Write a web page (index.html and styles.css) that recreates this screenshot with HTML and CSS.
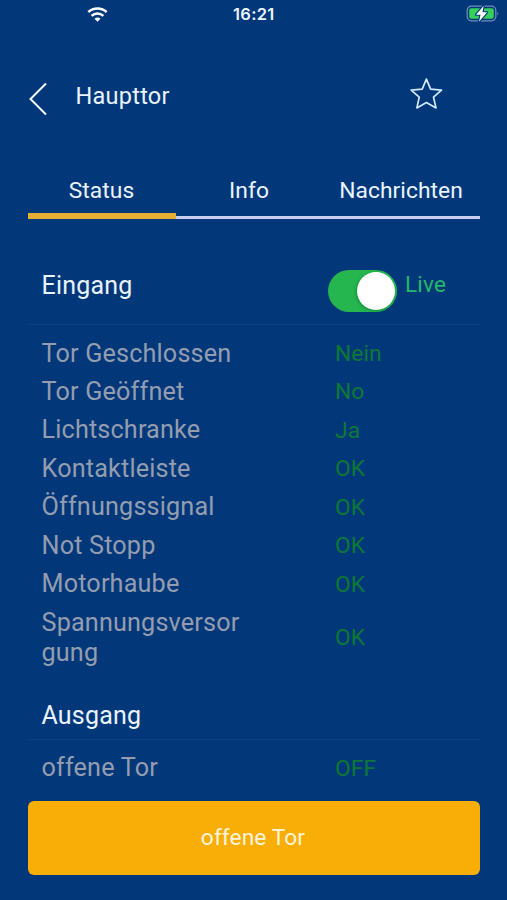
FILE: index.html
```html
<!DOCTYPE html>
<html lang="de">
<head>
<meta charset="utf-8">
<title>Haupttor</title>
<link rel="stylesheet" href="styles.css">
</head>
<body>
<div class="statusbar">
  <svg class="wifi" width="21" height="15" viewBox="0 0 21 15" fill="none" stroke="#fff" stroke-width="2.5">
    <path d="M1.300 5C6.500.3 14.500.3 19.700 5"/><path d="M4.600 8.900C8 5.800 13 5.800 16.400 8.900"/>
    <path d="M10.500 14.800 7.500 11.700Q10.500 9.300 13.500 11.700Z" fill="#fff" stroke="none"/>
  </svg>
  <span class="time">16:21</span>
  <svg class="battery" width="34" height="18" viewBox="0 0 34 18">
    <rect x="1.200" y="1.200" width="28.600" height="14.600" rx="4.200" fill="none" stroke="#6f91b8" stroke-width="1.200"/>
    <path d="M31.300 6.500Q33 8.500 31.300 10.500Z" fill="#6f91b8"/>
    <rect x="3.200" y="3.200" width="24.600" height="10.600" rx="2" fill="#35cf5b"/>
    <path d="M17.700.8 10 9.700H14.500L13 16.700 21.100 7.300H16.500Z" fill="#fff" stroke="#02387a" stroke-width="2.200" paint-order="stroke" stroke-linejoin="round"/>
  </svg>
</div>
<header class="header">
  <svg class="back" width="20" height="34" viewBox="0 0 20 34" fill="none" stroke="#f4f9ff" stroke-width="2"><path d="M17 1.500 1.500 17 17 32.500"/></svg>
  <h1 class="title">Haupttor</h1>
  <svg class="star" width="34" height="32" viewBox="0 0 34 32" fill="none" stroke="#d3e9ff" stroke-width="1.700" stroke-linejoin="round"><path d="M17.400 2.100 21.600 12.200 32.500 13.100 24.500 20.200 27 30.900 17.400 25.500 7.900 30.900 10.200 20.200 2.200 13.100 13.200 12.200Z"/></svg>
</header>
<nav class="tabs">
  <span class="tab active">Status</span>
  <span class="tab">Info</span>
  <span class="tab">Nachrichten</span>
</nav>
<section class="inputs">
  <div class="head">
    <h2 class="heading eingang">Eingang</h2>
    <span class="switch"><span class="knob"></span></span>
    <span class="live">Live</span>
  </div>
  <div class="rows">
    <div class="row"><span class="name">Tor Geschlossen</span><span class="value">Nein</span></div>
    <div class="row"><span class="name">Tor Geöffnet</span><span class="value">No</span></div>
    <div class="row"><span class="name">Lichtschranke</span><span class="value">Ja</span></div>
    <div class="row"><span class="name">Kontaktleiste</span><span class="value">OK</span></div>
    <div class="row"><span class="name">Öffnungssignal</span><span class="value">OK</span></div>
    <div class="row"><span class="name">Not Stopp</span><span class="value">OK</span></div>
    <div class="row"><span class="name">Motorhaube</span><span class="value">OK</span></div>
    <div class="row"><span class="name">Spannungsversorgung</span><span class="value">OK</span></div>
  </div>
</section>
<section class="outputs">
  <div class="head">
    <h2 class="heading">Ausgang</h2>
  </div>
  <div class="rows">
    <div class="row"><span class="name">offene Tor</span><span class="value">OFF</span></div>
  </div>
</section>
<button class="action">offene Tor</button>
</body>
</html>
```

FILE: styles.css
```css
* { box-sizing: border-box; }
body {
  margin: 0;
  height: 900px;
  overflow: hidden;
  background: #02387a;
  color: #eaf4ff;
  font-family: Roboto, sans-serif;
}
h1, h2 { margin: 0; font-weight: 400; }
svg { display: block; flex: none; }
.statusbar {
  height: 30px;
  padding: 0 7px 0 87px;
  display: grid;
  grid-template-columns: 146px 1fr 34px;
  align-items: start;
}
.wifi { margin-top: 7px; }
.time {
  font: 600 16.5px/29px Inter, sans-serif;
  letter-spacing: .3px;
}
.battery { margin-top: 5px; }
.header {
  height: 132px;
  padding: 0 64px 0 29px;
  display: flex;
  align-items: flex-start;
}
.back { margin-top: 52px; }
.title {
  flex: 1;
  margin: 51px 0 0 26.500px;
  font-size: 23.5px;
  line-height: 30px;
  letter-spacing: .25px;
}
.star { margin-top: 47px; }
.tabs {
  height: 57px;
  margin: 0 27px 0 28px;
  display: grid;
  grid-template-columns: 148px 146px 1fr;
  font-size: 22.8px;
  letter-spacing: .05px;
}
.tab {
  padding-top: 14px;
  line-height: 30px;
  text-align: center;
  border-bottom: 3px solid #c9cdf0;
}
.active {
  padding-right: 1px;
  border-bottom: 6px solid #e8ae32;
}
.inputs, .outputs { margin: 0 27px 0 28px; }
.head {
  display: flex;
  padding-left: 13.500px;
  border-bottom: 1.500px solid #103f7c;
}
.inputs .head { height: 106px; }
.outputs .head { height: 68px; }
.heading {
  width: 286.500px;
  margin-top: 29px;
  font-size: 25px;
  line-height: 30px;
  letter-spacing: .2px;
}
.eingang { margin-top: 52px; }
.switch {
  width: 69px;
  height: 42px;
  margin-top: 51px;
  padding: 2px;
  border-radius: 21px;
  background: #25b64f;
  display: flex;
  justify-content: flex-end;
}
.knob {
  width: 38px;
  height: 38px;
  border-radius: 50%;
  background: #fff;
  box-shadow: -1px 1px 3px #0a682d80;
}
.live {
  margin: 50px 0 0 8px;
  font-size: 22.5px;
  line-height: 30px;
  letter-spacing: .2px;
  color: #23b768;
}
.rows { padding: 9.300px 0 0 13.500px; }
.row {
  display: grid;
  grid-template-columns: 204px 1fr;
  column-gap: 89.500px;
  align-items: center;
  padding: 4.230px 0;
  line-height: 30px;
}
.name {
  font-size: 25.2px;
  letter-spacing: .17px;
  color: #949daf;
  word-break: break-all;
}
.value {
  font-size: 22.800px;
  line-height: 29px;
  letter-spacing: .05px;
  color: #0c7836;
}
.action {
  display: block;
  width: 452px;
  height: 74px;
  margin: 13px 0 0 28px;
  padding: 0 2px 0 0;
  border: 0;
  border-radius: 6px;
  background: #f9ad07;
  color: #fff5da;
  font: 22.700px/30px Roboto, sans-serif;
  letter-spacing: .1px;
}
```
